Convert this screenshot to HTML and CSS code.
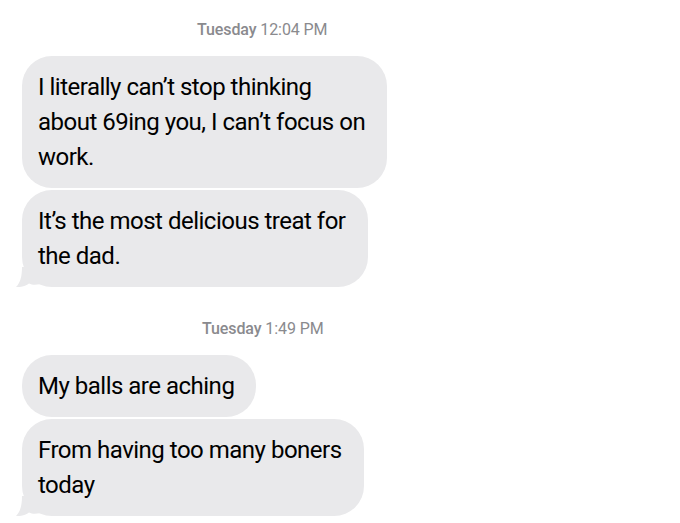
FILE: index.html
```html
<!DOCTYPE html>
<html lang="en">
  <head>
    <meta charset="utf-8">
    <title>Messages</title>
    <link rel="stylesheet" href="styles.css">
  </head>
  <body>
    <main class="thread">
      <p class="stamp"><b>Tuesday</b> 12:04 PM</p>
      <div class="group">
        <p class="bubble">I literally can’t stop thinking<br>about 69ing you, I can’t focus on<br>work.</p>
        <p class="bubble">It’s the most delicious treat for<br>the dad.
          <svg class="tail" viewBox="0 0 24 20" aria-hidden="true"><path d="M6 0 C6 10 4 16 0 20 C6 20.5 10 18.5 13 16.5 C16 18 19 18 24 17.3 L24 0 Z"/></svg>
        </p>
      </div>

      <p class="stamp stamp-second"><b>Tuesday</b> 1:49 PM</p>
      <div class="group">
        <p class="bubble">My balls are aching</p>
        <p class="bubble">From having too many boners<br>today
          <svg class="tail" viewBox="0 0 24 20" aria-hidden="true"><path d="M6 0 C6 10 4 16 0 20 C6 20.5 10 18.5 13 16.5 C16 18 19 18 24 17.3 L24 0 Z"/></svg>
        </p>
      </div>
    </main>
  </body>
</html>
```

FILE: styles.css
```css
body {
  margin: 0;
  background: #fff;
  font-family: Roboto, "Liberation Sans", sans-serif;
  color: #000;
}

.thread {
  padding: 19px 0 0 22px;
}

.stamp {
  margin: 0 0 15px;
  padding-left: 175px;
  font-size: 16px;
  line-height: 22px;
  letter-spacing: -0.1px;
  color: #8a8a8e;
}
.stamp b {
  font-weight: 500;
}
.stamp-second {
  margin-top: 31px;
  padding-left: 180px;
}

.group {
  display: flex;
  flex-direction: column;
  align-items: flex-start;
  gap: 2px;
}

.bubble {
  position: relative;
  margin: 0;
  padding: 13.5px 22px 13.5px 16px;
  background: #e9e9eb;
  border-radius: 30px;
  font-size: 24px;
  line-height: 35px;
  letter-spacing: -0.5px;
}

.tail {
  position: absolute;
  left: -6px;
  bottom: 0;
  width: 24px;
  height: 20px;
  fill: #e9e9eb;
}
```
